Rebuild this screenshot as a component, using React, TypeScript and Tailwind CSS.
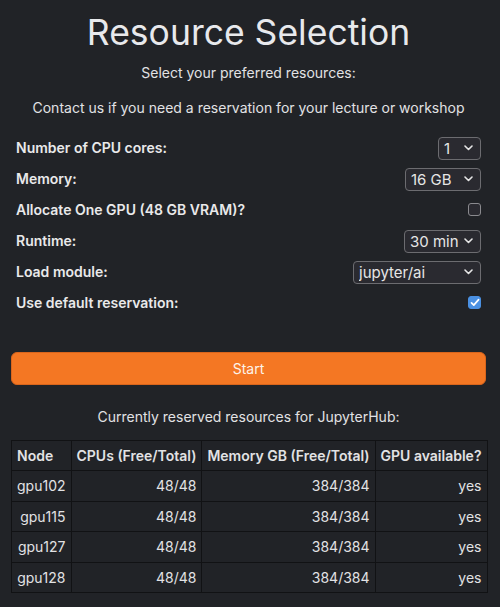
import { useState } from 'react';

const nodes = [
  { name: 'gpu102', cpus: '48/48', mem: '384/384', gpu: 'yes' },
  { name: 'gpu115', cpus: '48/48', mem: '384/384', gpu: 'yes' },
  { name: 'gpu127', cpus: '48/48', mem: '384/384', gpu: 'yes' },
  { name: 'gpu128', cpus: '48/48', mem: '384/384', gpu: 'yes' },
];

function Select({ value, options, width }: { value: string; options: string[]; width: string }) {
  const [v, setV] = useState(value);
  return (
    <div className={`relative h-[23px] ${width}`}>
      <select
        value={v}
        onChange={(e) => setV(e.target.value)}
        className="h-full w-full appearance-none rounded-[4px] border border-[#6c6c70] bg-[#2a2a30] pl-[5px] pr-[18px] text-[15px] leading-[21px] text-[#e6e6e6] outline-none"
      >
        {options.map((o) => (
          <option key={o}>{o}</option>
        ))}
      </select>
      <svg
        className="pointer-events-none absolute right-[8px] top-[9px]"
        width="9"
        height="6"
        viewBox="0 0 9 6"
        fill="none"
      >
        <path d="M1 1l3.5 3.5L8 1" stroke="#e6e6e6" strokeWidth="1.6" strokeLinecap="round" strokeLinejoin="round" />
      </svg>
    </div>
  );
}

function Check({ checked }: { checked: boolean }) {
  const [on, setOn] = useState(checked);
  return (
    <button
      onClick={() => setOn(!on)}
      className={`flex h-[13px] w-[13px] items-center justify-center rounded-[3px] border ${
        on ? 'border-[#4a90e2] bg-[#4a90e2]' : 'border-[#8a8a8e] bg-[#2a2a30]'
      }`}
    >
      {on ? (
        <svg width="10" height="9" viewBox="0 0 10 9" fill="none">
          <path d="M1.5 4.8l2.3 2.3L8.6 1.6" stroke="white" strokeWidth="1.7" strokeLinecap="round" strokeLinejoin="round" />
        </svg>
      ) : null}
    </button>
  );
}

function Row({ label, children }: { label: string; children: React.ReactNode }) {
  return (
    <div className="flex h-[31px] items-center justify-between pl-[5px] pr-[5px]">
      <span className="text-[14px] font-semibold text-[#e9e9ea]">{label}</span>
      {children}
    </div>
  );
}

export default function App() {
  return (
    <div
      className="min-h-[607px] bg-[#212327] pl-[11px] pr-[14px] text-[#e2e2e4]"
      style={{ fontFamily: 'Inter, "Noto Sans", sans-serif' }}
    >
      <h1 className="pt-[11px] text-center text-[35.5px] font-normal leading-[44px] text-[#e8e9ec]">
        Resource Selection
      </h1>
      <p className="mt-[8px] text-center text-[14px] leading-[20px]">Select your preferred resources:</p>
      <p className="mt-[15px] text-center text-[14px] leading-[20px]">
        Contact us if you need a reservation for your lecture or workshop
      </p>

      <div className="mt-[14px] flex flex-col">
        <Row label="Number of CPU cores:">
          <Select value="1" options={['1', '2', '4', '8', '16']} width="w-[43px]" />
        </Row>
        <Row label="Memory:">
          <Select value="16 GB" options={['8 GB', '16 GB', '32 GB', '64 GB']} width="w-[76px]" />
        </Row>
        <Row label="Allocate One GPU (48 GB VRAM)?">
          <Check checked={false} />
        </Row>
        <Row label="Runtime:">
          <Select value="30 min" options={['30 min', '1 h', '2 h', '4 h']} width="w-[77px]" />
        </Row>
        <Row label="Load module:">
          <Select value="jupyter/ai" options={['jupyter/ai', 'jupyter/base']} width="w-[128px]" />
        </Row>
        <Row label="Use default reservation:">
          <Check checked={true} />
        </Row>
      </div>

      <button className="mt-[34px] h-[33px] w-full rounded-[6px] border border-[#d9651c] bg-[#f47723] text-[14px] text-[#fdf3ea]">
        Start
      </button>

      <p className="mt-[22px] text-center text-[14px] leading-[20px]">
        Currently reserved resources for JupyterHub:
      </p>

      <table className="mt-[13px] w-full border-collapse border border-[#111214] text-[14px] text-[#e2e2e4]">
        <thead>
          <tr className="h-[30px]">
            {['Node', 'CPUs (Free/Total)', 'Memory GB (Free/Total)', 'GPU available?'].map((h) => (
              <th key={h} className="border border-[#111214] px-[5px] text-left font-semibold whitespace-nowrap">
                {h}
              </th>
            ))}
          </tr>
        </thead>
        <tbody>
          {nodes.map((n) => (
            <tr key={n.name} className="h-[30.5px]">
              <td className="border border-[#111214] px-[5px] text-right">{n.name}</td>
              <td className="border border-[#111214] px-[5px] text-right">{n.cpus}</td>
              <td className="border border-[#111214] px-[5px] text-right">{n.mem}</td>
              <td className="border border-[#111214] px-[5px] text-right">{n.gpu}</td>
            </tr>
          ))}
        </tbody>
      </table>
    </div>
  );
}
